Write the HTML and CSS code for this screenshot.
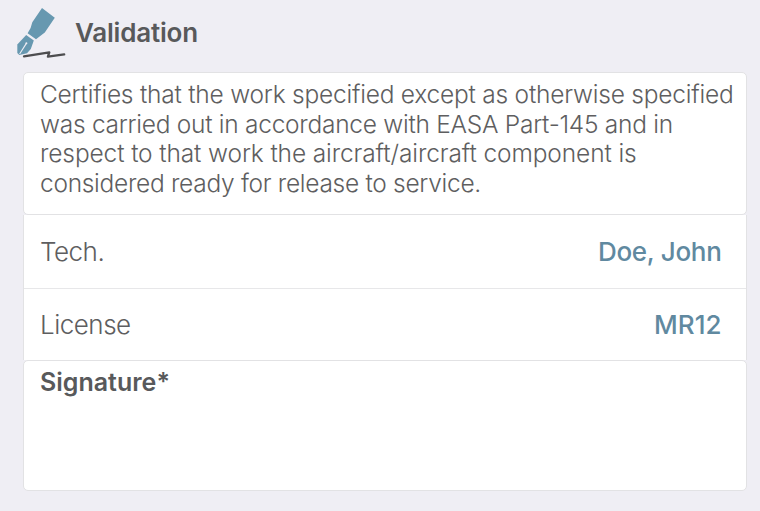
FILE: index.html
```html
<!DOCTYPE html>
<html lang="en">
<head>
<meta charset="utf-8">
<title>Validation</title>
<link rel="stylesheet" href="styles.css">
</head>
<body>
<main class="page">
  <header class="header">
    <svg class="icon" viewBox="0 0 52 54" aria-hidden="true">
      <path class="pen" d="M27 3 39.8 12.8 29.8 27.6 21 34.3 12.6 28.2 15.6 23 17.3 17.3Z"/>
      <path class="pen" d="M11.2 30 18.8 35.5 15.8 44 12 48.3 4.3 50 2.3 48V39.4Z"/>
      <path class="slit" d="M4.6 49 11.2 38.6"/>
      <circle class="hole" cx="11.4" cy="38.2" r="1"/>
      <path class="ink" d="M9 51.4 34.3 47.4 32.9 51.7 49.2 49.4"/>
    </svg>
    <h1 class="title">Validation</h1>
  </header>
  <section class="card statement">
    <p><span class="l1">Certifies that the work specified except as otherwise specified</span><br><span class="l2">was carried out in accordance with EASA Part-145 and in</span><br><span class="l3">respect to that work the aircraft/aircraft component is</span><br><span class="l4">considered ready for release to service.</span></p>
  </section>
  <dl class="rows">
    <div class="row"><dt>Tech.</dt><dd class="name">Doe, John</dd></div>
    <div class="row"><dt>License</dt><dd>MR12</dd></div>
  </dl>
  <section class="card signature"><h2>Signature*</h2></section>
</main>
</body>
</html>
```
FILE: styles.css
```css
* { box-sizing: border-box; margin: 0; padding: 0; }
body { background: #efeef4; font-family: Inter, "Liberation Sans", sans-serif; color: #58595b; }
.page { width: 760px; height: 511px; padding: 5px 13.5px 0 15px; }
.header { display: flex; height: 66.5px; }
.icon { width: 52px; height: 54px; flex: none; }
.pen { fill: #6798b0; }
.slit { stroke: #efeef4; stroke-width: 1.1; }
.hole { fill: #efeef4; }
.ink { fill: none; stroke: #4d4d4f; stroke-width: 2.3; stroke-linejoin: round; stroke-linecap: round; }
.title { margin-left: 8px; font-size: 26px; line-height: 32px; padding-top: 12px; font-weight: 600; letter-spacing: -0.2px; }
.card, .rows { margin-left: 8px; background: #fff; border: 1.5px solid #e2e2e4; }
.card { border-radius: 5px; }
.statement { height: 143.5px; padding: 7.5px 0 0 16px; font-size: 24.5px; line-height: 29.6px; font-weight: 300; white-space: nowrap; color: #5e5e60; }
.l1 { letter-spacing: -0.22px; }
.l2 { letter-spacing: -0.27px; }
.l3 { letter-spacing: -0.12px; }
.l4 { letter-spacing: -0.29px; }
.rows { border-top: 0; border-bottom: 0; }
.row { height: 73px; display: flex; align-items: center; justify-content: space-between; padding: 0 24px 0 16px; font-size: 26px; }
.row + .row { height: 72px; border-top: 1.5px solid #e7e7e9; }
dt { font-weight: 300; letter-spacing: -0.5px; color: #5e5e60; }
dd { font-weight: 500; color: #6089a0; }
.name { letter-spacing: -0.3px; }
.signature { height: 131px; padding: 5px 16px; }
h2 { font-size: 25px; line-height: 32px; font-weight: 600; }
```
